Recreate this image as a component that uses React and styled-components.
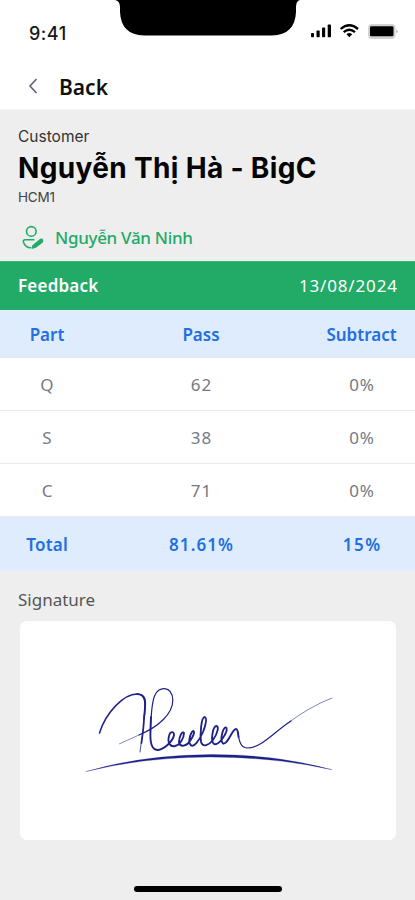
import React from "react";
import styled, { createGlobalStyle } from "styled-components";

const Global = createGlobalStyle`
  * { box-sizing: border-box; }
  body { margin: 0; background: #eeeeee; }
`;

const Screen = styled.main`
  width: 415px;
  height: 900px;
  overflow: hidden;
  display: flex;
  flex-direction: column;
  background: #eeeeee;
  font-family: "Noto Sans", sans-serif;
`;

const Label = styled.span`
  font-family: ${(p) => (p.$inter ? '"Inter", sans-serif' : "inherit")};
  font-size: ${(p) => p.$size || 17}px;
  font-weight: ${(p) => p.$weight || 400};
  letter-spacing: ${(p) => p.$track || 0}px;
  margin-right: ${(p) => -(p.$track || 0)}px;
  color: ${(p) => p.$color || "inherit"};
  line-height: ${(p) => p.$line || "24px"};
  white-space: nowrap;
`;

const Header = styled.header`
  height: 110px;
  flex: none;
  background: #ffffff;
  border-bottom: 1px solid #f6f6f6;
`;

const StatusBar = styled.div`
  height: 64px;
  display: grid;
  grid-template-columns: 115px 185px 1fr;
`;

const Clock = styled.div`
  padding: 22px 0 0 29px;
`;

const StatusIcons = styled.div`
  padding: 23px 0 0 11px;
`;

const BackBar = styled.div`
  height: 46px;
  padding-left: 27px;
  display: flex;
  align-items: center;
  gap: 20px;
`;

const Customer = styled.section`
  height: 151px;
  flex: none;
  padding: 15px 18px 0;
  display: flex;
  flex-direction: column;
  align-items: flex-start;
`;

const Person = styled.div`
  display: flex;
  align-items: center;
  gap: 11px;
  margin: 17px 0 0 4px;
`;

const FeedbackBar = styled.div`
  height: 49px;
  flex: none;
  padding: 0 18px;
  display: flex;
  align-items: center;
  justify-content: space-between;
  background: #22aa67;
  border-top: 1px solid #3eb67a;
  color: #ffffff;
`;

const Row = styled.div`
  height: ${(p) => p.$height || 53}px;
  flex: none;
  display: grid;
  grid-template-columns: 94px 214px 107px;
  padding-top: 1px;
  align-items: center;
  justify-items: center;
  background: ${(p) => (p.$accent ? "#deecfd" : "#ffffff")};
  border-bottom: ${(p) => (p.$accent ? "none" : "1px solid #e9eaec")};
  color: ${(p) => (p.$accent ? "#226fe0" : "#757983")};
`;

const SignatureSection = styled.section`
  padding: 17px 19px 0 20px;
  display: flex;
  flex-direction: column;
`;

const SignatureTitle = styled.div`
  height: 33px;
  margin-left: -2px;
`;

const SignatureCard = styled.div`
  height: 219px;
  border-radius: 7px;
  overflow: hidden;
  background: #ffffff;
`;

const HomeIndicator = styled.div`
  width: 148px;
  height: 6px;
  margin: auto 0 8px 134px;
  flex: none;
  border-radius: 3px;
  background: #000000;
`;

const Drawing = styled.svg`
  display: block;
  flex: none;
`;

const Notch = () => (
  <Drawing width="185" height="36" viewBox="0 0 185 36">
    <path d="M0 0Q5 1 5 7V12Q6 35 29 35.5H157Q180 35 181 12V7Q181 1 185 0Z" />
  </Drawing>
);

const Indicators = () => (
  <Drawing width="90" height="18" viewBox="0 0 90 18">
    <rect x="0" y="10" width="3" height="4.2" rx=".8" />
    <rect x="5.5" y="7.5" width="3.2" height="6.7" rx=".8" />
    <rect x="11" y="4.5" width="3.2" height="9.7" rx=".8" />
    <rect x="16.7" y="1.5" width="3.3" height="12.7" rx=".8" />
    <g fill="none" stroke="#000" strokeWidth="2.3">
      <path d="M29.7 6Q38.3-1.4 47 6" />
      <path d="M32.7 9.2Q38.3 4.4 44 9.2" />
    </g>
    <path d="M35.5 11.2Q38.3 8.8 41.2 11.2L38.3 14.2Z" />
    <rect x="57" y="1" width="27.5" height="15" rx="4" fill="#d2d2d2" />
    <rect x="59" y="3.3" width="23.5" height="10" rx="1.3" />
    <path d="M85.3 6.5Q88 8.5 85.3 10.6Z" fill="#aaa" />
  </Drawing>
);

const BackIcon = () => (
  <Drawing width="12" height="18" viewBox="0 0 12 18">
    <path d="M9.5 1L3 8L9.5 15" fill="none" stroke="#5b6079" strokeWidth="1.6" />
  </Drawing>
);

const PersonIcon = () => (
  <Drawing width="22" height="26" viewBox="0 0 22 26" fill="none" stroke="#22aa67" strokeWidth="1.6">
    <circle cx="9.3" cy="6.4" r="4.8" />
    <path d="M12.5 14.7H3.2Q.8 14.7 1.5 17.2Q3.3 22.8 9.3 22.7" />
    <path d="M10.8 20.8L18.3 14.4Q20 13.8 20.7 15.3Q21 16.5 19.6 17.7L13.2 22.5L10.2 23.2Z" fill="#22aa67" strokeWidth="1.2" strokeLinejoin="round" />
  </Drawing>
);

const Signature = () => (
  <Drawing width="376" height="219" viewBox="20 621 376 219" fill="none" stroke="#1d2188" strokeLinecap="round" strokeLinejoin="round">
    <path d="M99.5 733C106 712 124 694 137 694C149 694 145 707 144 719" strokeWidth="1.5" />
    <path d="M137 694C148 694 144.8 707 144 719C143.5 730 142 738 141.5 743" strokeWidth="1.75" />
    <path d="M142 737L140 752" strokeWidth=".8" />
    <path d="M119.5 743.8L139 735" strokeWidth=".55" />
    <path d="M139 735C158 727 173 714 172.8 700C172 685 158 686 154.5 696C151 705 150.8 723 150.5 733" strokeWidth="1.2" />
    <path d="M151 717C150 736 149 749 157 750C164 750 173 741 174 735C174 731 170 731 169 736C167 744 171 747 175 746C180 745 184 738 184 733C182 730 179 738 179 742C180 748 187 746 190 741C193 737 195 732 193.5 731C191 731 188 741 190 744C193 750 200 739 203 732C206 724 207 718 204.8 717C201 717 200 735 201 742C203 748 209 745 213 740C218 733 219 726 216.5 726C213 726 210 741 214 744C219 746 228 732 226.5 728C224 724 219 740 223 743.5C228 745 232 729 236 729C238 729 238 733 238.5 737" strokeWidth="1.85" />
    <path d="M238 732C239 742 241 747.5 247 748C262 748 275 731 291 721" strokeWidth="1.2" />
    <path d="M288 723Q309 707 332 698" strokeWidth=".75" opacity=".75" />
    <path d="M86 771.5Q142 755 210 754.5Q274 754 332 769.7Q275 757 210 757Q145 757 86 771.5Z" fill="#1d2188" strokeWidth=".25" />
  </Drawing>
);

const rows = [
  ["Q", "62", "0%"],
  ["S", "38", "0%"],
  ["C", "71", "0%"],
];

export default function App() {
  return (
    <Screen>
      <Global />
      <Header>
        <StatusBar>
          <Clock><Label $inter $size={18} $weight={500} $color="#171717" $track={0.5}>9:41</Label></Clock>
          <Notch />
          <StatusIcons><Indicators /></StatusIcons>
        </StatusBar>
        <BackBar>
          <BackIcon />
          <Label $size={21} $weight={600} $color="#111">Back</Label>
        </BackBar>
      </Header>
      <Customer>
        <Label $inter $size={15.5} $color="#333">Customer</Label>
        <Label $inter $size={28} $weight={700} $color="#050505" $line="38px" $track={0.34}>Nguyễn Thị Hà - BigC</Label>
        <Label $inter $size={13.5} $color="#444" $track={-0.2} $line="21px">HCM1</Label>
        <Person>
          <PersonIcon />
          <Label $weight={500} $color="#22aa67" $track={-0.3}>Nguyễn Văn Ninh</Label>
        </Person>
      </Customer>
      <FeedbackBar>
        <Label $weight={600} $track={0.2}>Feedback</Label>
        <Label $track={0.85}>13/08/2024</Label>
      </FeedbackBar>
      <Row $accent $height={48}>
        {["Part", "Pass", "Subtract"].map((t) => <Label key={t} $weight={600}>{t}</Label>)}
      </Row>
      {rows.map((row) => (
        <Row key={row[0]}>
          {row.map((t) => <Label key={t} $track={0.8}>{t}</Label>)}
        </Row>
      ))}
      <Row $accent $height={54}>
        <Label $weight={600} $track={0.2}>Total</Label>
        <Label $weight={600} $track={1.1}>81.61%</Label>
        <Label $weight={600} $track={1.5}>15%</Label>
      </Row>
      <SignatureSection>
        <SignatureTitle><Label $color="#555">Signature</Label></SignatureTitle>
        <SignatureCard><Signature /></SignatureCard>
      </SignatureSection>
      <HomeIndicator />
    </Screen>
  );
}
